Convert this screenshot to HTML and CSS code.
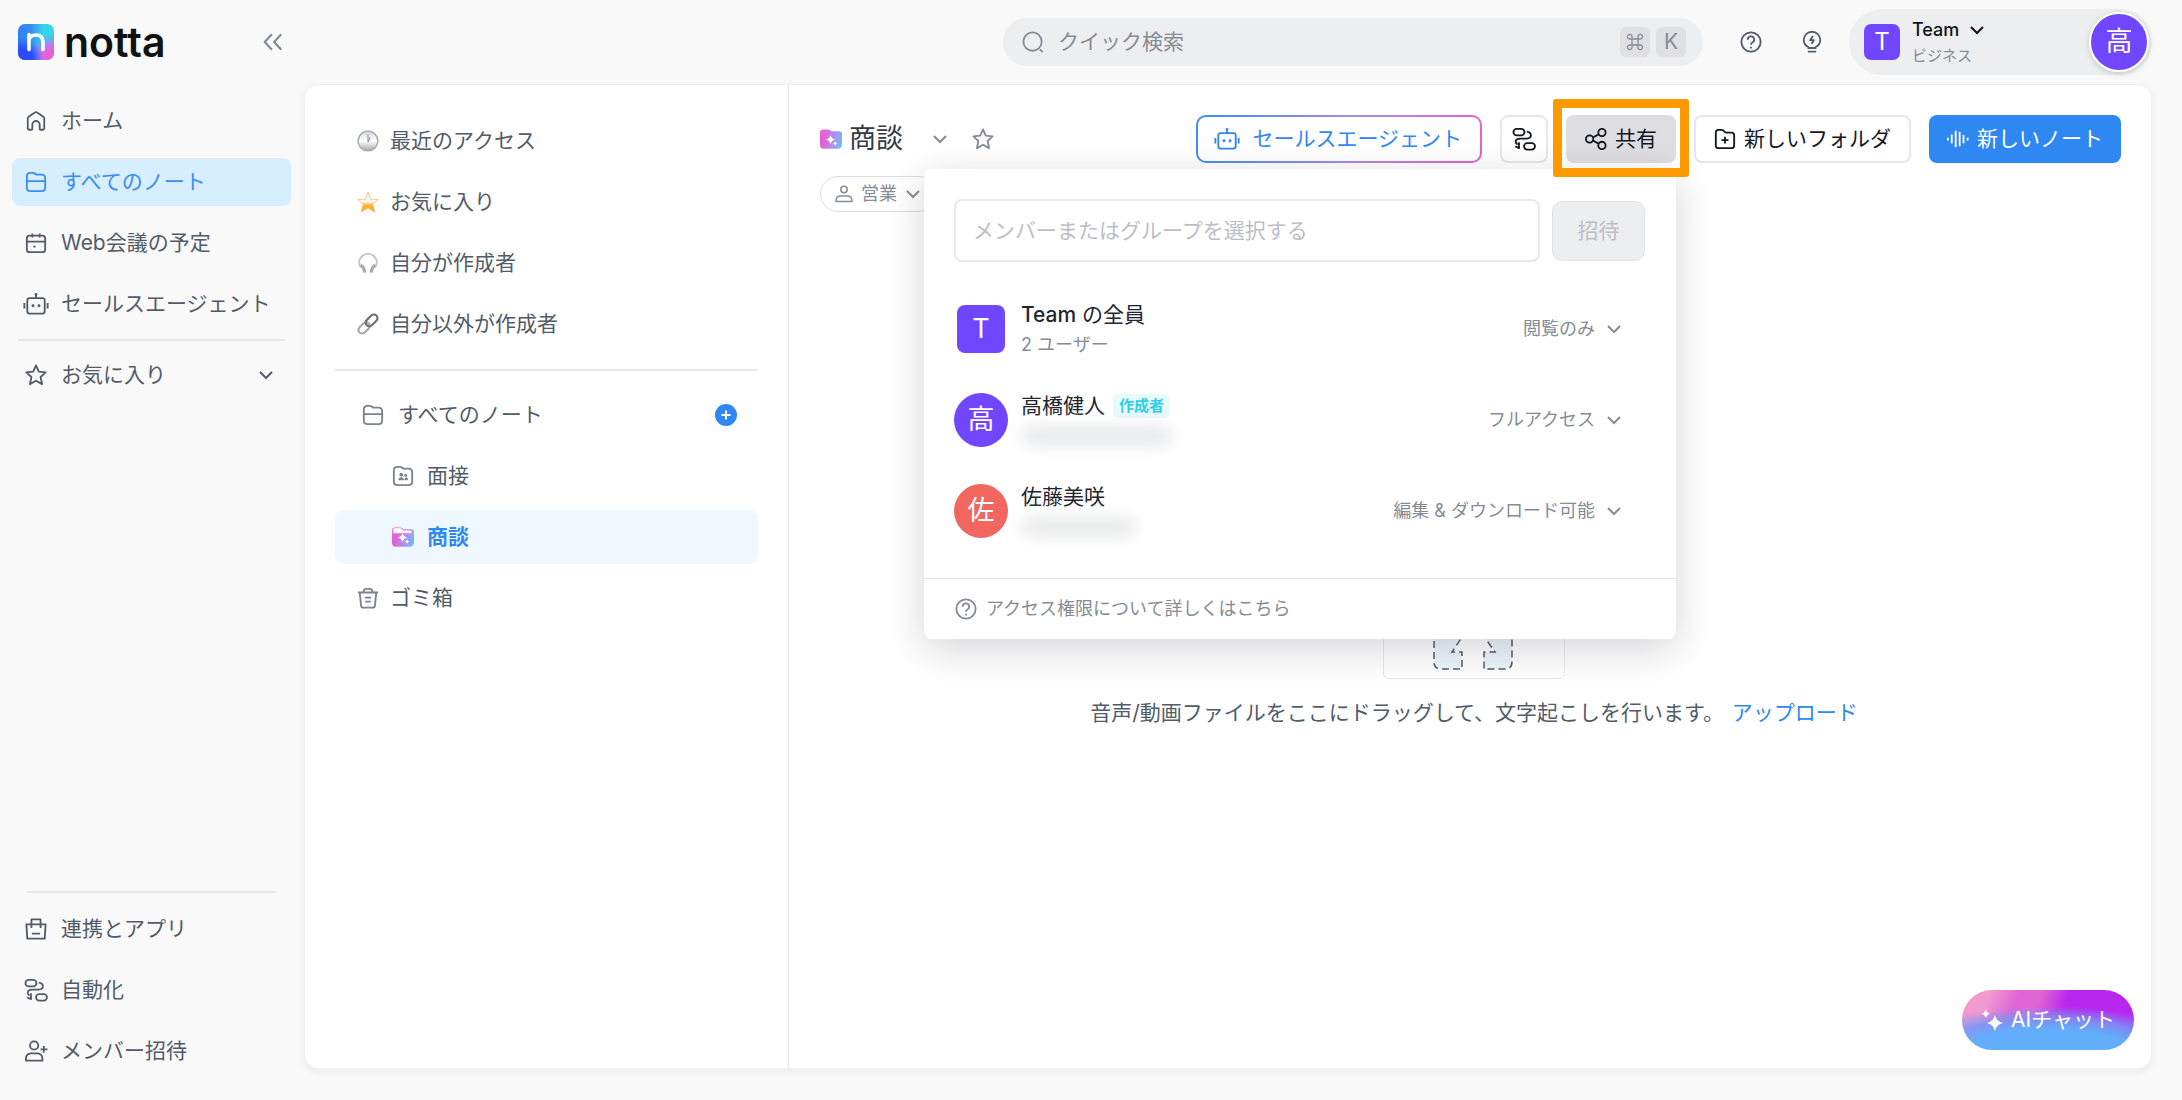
FILE: index.html
```html
<!DOCTYPE html>
<html lang="ja">
<head>
    <meta charset="UTF-8">
    <meta name="viewport" content="width=device-width, initial-scale=1.0">
    <title>商談 - Notta</title>
    <link rel="stylesheet" href="styles.css">
</head>
<body>
    <!-- Shared icons -->
    <svg class="sprite" aria-hidden="true">
        <symbol id="i-home" viewBox="0 0 24 24"><path d="M3 9.500 Q3 8 4.300 7.200 L10.800 2.700 Q12 2 13.200 2.700 L19.700 7.200 Q21 8 21 9.500 V20 Q21 21.500 19.500 21.500 H17 Q16 21.500 16 20.500 V16 A4 4 0 0 0 8 16 V20.500 Q8 21.500 7 21.500 H4.500 Q3 21.500 3 20 Z"/></symbol>
        <symbol id="i-folder" viewBox="0 0 24 24"><path d="M2 6 Q2 2 6 2 H8.500 Q10 2 11 3 Q12 4 13.500 4 H18 Q22 4 22 8 V18 Q22 22 18 22 H6 Q2 22 2 18 Z M2 11 H22"/></symbol>
        <symbol id="i-calendar" viewBox="0 0 24 24"><rect x="2" y="4" width="20" height="18" rx="3"/><path d="M2 10.500 H22 M8 1.500 V6 M16 1.500 V6 M9 16 H11.500"/></symbol>
        <symbol id="i-bot" viewBox="0 0 24 24"><rect x="2.500" y="5.500" width="19" height="17" rx="2.500"/><path d="M12 2 V5.500 M-0.700 11 V17 M24.700 11 V17"/><path stroke-width="3.200" stroke-linecap="round" d="M8.700 14 h.01 M15.300 14 h.01 M12 1.500 h.01"/></symbol>
        <symbol id="i-star" viewBox="0 0 24 24"><path d="M12 1.500 L15 8.300 L22.500 9.200 L17 14.200 L18.600 22 L12 18.200 L5.400 22 L7 14.200 L1.500 9.200 L9 8.300 Z"/></symbol>
        <symbol id="i-down" viewBox="0 0 16 16"><path d="M2 5 L8 11 L14 5"/></symbol>
        <symbol id="i-bag" viewBox="0 0 24 24"><path d="M1.500 7 H22.500 L21.500 22.500 H2.500 Z M7 11 V1.500 H17 V11 M7.500 17 H16.500"/></symbol>
        <symbol id="i-flow" viewBox="0 0 24 24"><rect x="0.500" y="1" width="12" height="7" rx="3.500"/><rect x="12" y="16.500" width="12" height="7" rx="3.500"/><path d="M15 4 Q19.500 4.500 19.500 8 Q19.500 11.500 15 11.500 H8 Q3 11.500 3 15 Q3 17 5 18 M6.500 15.500 V22 L2.500 20"/></symbol>
        <symbol id="i-invite" viewBox="0 0 24 24"><circle cx="10" cy="6" r="4.500"/><path d="M1 22.500 V20 Q1.500 14.500 7 14.500 H13 Q18.500 14.500 19 20 V22.500 Z M20.500 6.500 V14 M17 10.300 H24.500"/></symbol>
        <symbol id="i-person" viewBox="0 0 24 24"><circle cx="12" cy="6" r="4.300"/><path d="M1.500 22 V20 Q2 14.500 7 14.500 H17 Q22 14.500 22.500 20 V22 Z"/></symbol>
        <symbol id="i-help" viewBox="0 0 24 24"><circle cx="12" cy="12" r="10.500"/><path d="M8.500 9.500 A3.500 3.500 0 1 1 13.500 12.500 Q12 13.300 12 15 M12 17.300 V19"/></symbol>
        <symbol id="i-share" viewBox="0 0 24 24"><circle cx="5" cy="12" r="4"/><circle cx="18.500" cy="5" r="4"/><circle cx="18.500" cy="19" r="4"/><path d="M8.700 10.300 L14.800 7 M8.700 13.700 L14.800 17"/></symbol>
        <symbol id="i-aifolder" viewBox="0 0 24 24"><path fill="url(#pink)" stroke="none" d="M0 5 Q0 1.500 4 1.500 H8.500 Q10 1.500 11 2.500 Q12 3.500 13.500 3.500 H21 Q24 3.500 24 7 V18 Q23.500 22.500 20 22.500 H4 Q0 22.500 0 18.500 Z"/><path fill="#fff" stroke="none" d="M11.500 7.500 Q12.500 11.500 16.500 12.500 Q12.500 13.500 11.500 17.500 Q10.500 13.500 6.500 12.500 Q10.500 11.500 11.500 7.500 Z M16.500 14.500 Q17 16.500 19 17 Q17 17.500 16.500 19.500 Q16 17.500 14 17 Q16 16.500 16.500 14.500 Z"/></symbol>
        <linearGradient id="pink" x1="0" y1="0.200" x2="1" y2="0.400">
            <stop offset="0.200" stop-color="#e462d3"/><stop offset="0.600" stop-color="#b48af0"/><stop offset="1" stop-color="#79b4fb"/>
        </linearGradient>
        <linearGradient id="silver" x1="0" y1="0" x2="0" y2="1">
            <stop offset="0" stop-color="#d5d7db"/><stop offset="0.500" stop-color="#ffffff"/><stop offset="1" stop-color="#a6a9ae"/>
        </linearGradient>
        <linearGradient id="gold" x1="0" y1="0" x2="0" y2="1">
            <stop offset="0.500" stop-color="#f7f5f2"/><stop offset="0.650" stop-color="#fbb535"/><stop offset="1" stop-color="#fba21c"/>
        </linearGradient>
    </svg>

    <aside class="sidebar">
        <div class="brand">
            <a href="#" class="brand-link">
                <svg class="brand-mark" viewBox="0 0 36 36">
                    <defs>
                        <linearGradient id="base" x1="0" y1="0" x2="1" y2="0">
                            <stop offset="0" stop-color="#2f80f5"/><stop offset="0.350" stop-color="#3a8cf5"/><stop offset="0.700" stop-color="#35d4e8"/>
                        </linearGradient>
                        <radialGradient id="corner" cx="1" cy="1" r="0.700">
                            <stop offset="0.400" stop-color="#e75fd6"/><stop offset="0.650" stop-color="#c078e8" stop-opacity="0.900"/><stop offset="1" stop-color="#8a8cf5" stop-opacity="0"/>
                        </radialGradient>
                        <radialGradient id="deep" cx="0.100" cy="1" r="0.600">
                            <stop offset="0.500" stop-color="#2b4bff"/><stop offset="1" stop-color="#2b4bff" stop-opacity="0"/>
                        </radialGradient>
                    </defs>
                    <rect width="36" height="36" rx="7" fill="url(#base)"/>
                    <rect width="36" height="36" rx="7" fill="url(#corner)"/>
                    <rect width="36" height="36" rx="7" fill="url(#deep)"/>
                    <path d="M11 10.500 V25.500 M11 16 Q12 11 18 11 Q25 11 25 18 V25.500" fill="none" stroke="#fff" stroke-width="3.600" stroke-linecap="round"/>
                </svg>
                <span class="brand-name">notta</span>
            </a>
            <button class="icon-btn muted" aria-label="閉じる">
                <svg class="icon" viewBox="0 0 20 20"><path d="M9 3 L2.500 10 L9 17 M17.500 3 L11 10 L17.500 17"/></svg>
            </button>
        </div>

        <nav class="side-nav">
            <a href="#" class="side-item"><svg class="icon"><use href="#i-home"/></svg>ホーム</a>
            <a href="#" class="side-item active"><svg class="icon"><use href="#i-folder"/></svg>すべてのノート</a>
            <a href="#" class="side-item"><svg class="icon"><use href="#i-calendar"/></svg>Web会議の予定</a>
            <a href="#" class="side-item"><svg class="icon"><use href="#i-bot"/></svg>セールスエージェント</a>
        </nav>
        <hr class="side-rule">
        <button class="side-item side-toggle">
            <svg class="icon"><use href="#i-star"/></svg>お気に入り
            <svg class="chevron"><use href="#i-down"/></svg>
        </button>

        <hr class="side-rule side-rule-bottom">
        <nav class="side-nav">
            <a href="#" class="side-item"><svg class="icon"><use href="#i-bag"/></svg>連携とアプリ</a>
            <a href="#" class="side-item"><svg class="icon"><use href="#i-flow"/></svg>自動化</a>
            <a href="#" class="side-item"><svg class="icon"><use href="#i-invite"/></svg>メンバー招待</a>
        </nav>
    </aside>

    <div class="page">
        <header class="topbar">
            <label class="search">
                <svg class="icon" viewBox="0 0 24 24"><circle cx="11.500" cy="11.500" r="10"/><path d="M19.500 20 L22.500 23"/></svg>
                <input type="search" placeholder="クイック検索" aria-label="クイック検索">
                <kbd><svg class="cmd" viewBox="0 0 18 18"><path d="M6 6 H12 V12 H6 Z M6 6 H4 A2.300 2.300 0 1 1 6 4 Z M12 6 V4 A2.300 2.300 0 1 1 14 6 Z M12 12 H14 A2.300 2.300 0 1 1 12 14 Z M6 12 V14 A2.300 2.300 0 1 1 4 12 Z"/></svg></kbd>
                <kbd>K</kbd>
            </label>
            <button class="icon-btn" aria-label="ヘルプ"><svg class="icon"><use href="#i-help"/></svg></button>
            <button class="icon-btn" aria-label="お知らせ">
                <svg class="icon" viewBox="0 0 24 24"><path d="M8 18.500 V17.500 Q3 15 3 9.800 A9 9 0 0 1 21 9.800 Q21 15 16 17.500 V18.500 Z M7.500 22.500 H16.500 M13 5.500 L10 10 H14 L11.500 14"/></svg>
            </button>
            <div class="account">
                <span class="team-mark">T</span>
                <div class="account-text">
                    <button class="team-switch">Team <svg class="chevron"><use href="#i-down"/></svg></button>
                    <span class="plan">ビジネス</span>
                </div>
                <button class="avatar account-avatar">高</button>
            </div>
        </header>

        <main class="workspace">
            <section class="folders">
                <a href="#" class="folder-item">
                    <svg class="icon" viewBox="0 0 24 24"><circle cx="12" cy="12" r="10.800" fill="url(#silver)" stroke="#a5a8ad" stroke-width="1.500"/><path d="M12 4.500 V13 L14.500 8" stroke="#95989e" stroke-width="1.200"/></svg>最近のアクセス
                </a>
                <a href="#" class="folder-item">
                    <svg class="icon" viewBox="0 0 24 24"><path d="M12 1 L15 9 L23 9.300 L17 14.500 L19.500 23 L12 18.500 L4.500 23 L7 14.500 L1 9.300 L9 9 Z" fill="url(#gold)" stroke="#f3b65c" stroke-width="0.800"/></svg>お気に入り
                </a>
                <a href="#" class="folder-item">
                    <svg class="icon" viewBox="0 0 24 24"><path d="M4 17 Q1.500 12 3 8 Q6 2 12 2 Q18 2 21 8 Q22.500 12 20 17" stroke="#c3c5c9"/><path d="M4 14.500 Q7.500 16 8.500 22.500 M20 14.500 Q16.500 16 15.500 22.500" stroke="#a7a9ae" stroke-width="3.500"/></svg>自分が作成者
                </a>
                <a href="#" class="folder-item">
                    <svg class="icon" viewBox="0 0 24 24"><g transform="rotate(-45 12 12)"><rect x="-1" y="8" width="14" height="8" rx="4" stroke="#a7a9ae" stroke-width="2.400"/><rect x="10" y="8" width="15" height="8" rx="4" stroke="#6f7379" stroke-width="2.400"/></g></svg>自分以外が作成者
                </a>
                <hr class="folder-rule">
                <div class="folder-item folder-root">
                    <a href="#"><svg class="icon"><use href="#i-folder"/></svg>すべてのノート</a>
                    <button class="add-btn" aria-label="追加"><svg viewBox="0 0 22 22"><path d="M11 6.500 V15.500 M6.500 11 H15.500"/></svg></button>
                </div>
                <a href="#" class="folder-item nested">
                    <svg class="icon" viewBox="0 0 24 24"><path d="M2 6 Q2 2 6 2 H8.500 Q10 2 11 3 Q12 4 13.500 4 H18 Q22 4 22 8 V18 Q22 22 18 22 H6 Q2 22 2 18 Z"/><circle cx="10" cy="10.500" r="1" /><circle cx="15" cy="11.300" r="0.700"/><path d="M8 15.500 Q10 13 12 15.500 Z M14.500 15.500 Q15.500 13.500 16.500 15.500 Z"/></svg>面接
                </a>
                <a href="#" class="folder-item nested active"><svg class="icon" viewBox="0 0 24 24"><use href="#i-aifolder"/><path d="M1 8 V5 Q1 2 4 2 H8 Q10 2 11 3.500 Q12 4.500 13.500 4.500 H19 Q22 4.500 22 8 Z" fill="#fff" stroke="#f08bd2" stroke-width="0.800"/></svg>商談</a>
                <a href="#" class="folder-item">
                    <svg class="icon" viewBox="0 0 24 24"><path d="M1 6 H23 M7 5.500 Q7.500 2 10 2 H14 Q16.500 2 17 5.500 M3 6.500 L4.500 20.500 Q4.700 22.500 7 22.500 H17 Q19.300 22.500 19.500 20.500 L21 6.500 M8.500 11.500 H15.500 M9 16 H15"/></svg>ゴミ箱
                </a>
            </section>

            <section class="content">
                <div class="content-head">
                    <h1><svg class="icon"><use href="#i-aifolder"/></svg>商談</h1>
                    <button class="icon-btn muted title-menu" aria-label="メニュー"><svg class="chevron"><use href="#i-down"/></svg></button>
                    <button class="icon-btn muted title-star" aria-label="お気に入り"><svg class="icon"><use href="#i-star"/></svg></button>

                    <div class="actions">
                        <button class="btn btn-agent"><svg class="icon"><use href="#i-bot"/></svg>セールスエージェント</button>
                        <button class="btn btn-square" aria-label="自動化"><svg class="icon"><use href="#i-flow"/></svg></button>
                        <div class="share">
                            <button class="btn btn-share"><svg class="icon"><use href="#i-share"/></svg>共有</button>

                            <div class="share-panel">
                                <form class="invite">
                                    <input type="text" placeholder="メンバーまたはグループを選択する" aria-label="メンバー">
                                    <button type="button" disabled>招待</button>
                                </form>
                                <ul class="members">
                                    <li>
                                        <span class="avatar team">T</span>
                                        <div class="member-text">
                                            <strong><span><b>Team</b> の全員</span></strong>
                                            <small>2 ユーザー</small>
                                        </div>
                                        <label class="role"><select aria-label="Team の権限"><option>閲覧のみ</option></select><svg class="chevron"><use href="#i-down"/></svg></label>
                                    </li>
                                    <li>
                                        <span class="avatar">高</span>
                                        <div class="member-text">
                                            <strong>高橋健人 <span class="badge">作成者</span></strong>
                                            <span class="hidden-mail"></span>
                                        </div>
                                        <label class="role"><select aria-label="高橋健人の権限"><option>フルアクセス</option></select><svg class="chevron"><use href="#i-down"/></svg></label>
                                    </li>
                                    <li>
                                        <span class="avatar red">佐</span>
                                        <div class="member-text">
                                            <strong>佐藤美咲</strong>
                                            <span class="hidden-mail short"></span>
                                        </div>
                                        <label class="role"><select aria-label="佐藤美咲の権限"><option>編集 &amp; ダウンロード可能</option></select><svg class="chevron"><use href="#i-down"/></svg></label>
                                    </li>
                                </ul>
                                <a href="#" class="share-help"><svg class="icon"><use href="#i-help"/></svg>アクセス権限について詳しくはこちら</a>
                            </div>
                        </div>
                        <button class="btn btn-folder">
                            <svg class="icon" viewBox="0 0 24 24"><path d="M2 5 Q2 2 5 2 H8.500 Q10 2 11 3.500 Q12 5 13.500 5 H19 Q22 5 22 8 V19 Q22 22 19 22 H5 Q2 22 2 19 Z M12 9.500 V17 M8.200 13.300 H15.800"/></svg>新しいフォルダ
                        </button>
                        <button class="btn btn-note">
                            <svg class="icon" viewBox="0 0 24 24"><path d="M1 10.500 V13.500 M5.200 7 V17 M9.500 3 V21 M13.800 4 V20 M18 7.500 V16.500 M22.500 10.500 V13.500"/></svg>新しいノート
                        </button>
                    </div>
                </div>

                <button class="chip"><svg class="icon"><use href="#i-person"/></svg>営業<svg class="chevron"><use href="#i-down"/></svg></button>

                <div class="dropzone">
                    <svg class="drop-art" viewBox="0 0 182 120">
                        <rect x="0.500" y="0.500" width="181" height="119" rx="5" fill="#fff" stroke="#e8e9ec"/>
                        <path d="M51 60 V103 Q51 110 58 110 H79 V93 H69 L90 62 L112 93 H101 V110 H122 Q129 110 129 103 V60" fill="#edf5fc" stroke="#555c68" stroke-width="1.500" stroke-dasharray="7 4"/>
                    </svg>
                    <p>音声/動画ファイルをここにドラッグして、文字起こしを行います。 <a href="#">アップロード</a></p>
                </div>

                <button class="ai-chat">
                    <svg viewBox="0 0 24 24"><path d="M14.500 6 Q16 13 23 14.500 Q16 16 14.500 23 Q13 16 6 14.500 Q13 13 14.500 6 Z M5 0.500 Q5.800 4.200 9.500 5 Q5.800 5.800 5 9.500 Q4.200 5.800 0.500 5 Q4.200 4.200 5 0.500 Z"/></svg>AIチャット
                </button>
            </section>
        </main>
    </div>
</body>
</html>
```
FILE: styles.css
```css
:root {
    --bg: #f9f9f9;
    --text: #525c69;
    --text-dark: #1f2630;
    --muted: #868c96;
    --line: #e6e7ea;
    --blue: #2f88f2;
    --purple: #7047ff;
}

* {
    box-sizing: border-box;
}

body {
    margin: 0;
    min-height: 100vh;
    display: flex;
    background: var(--bg);
    color: var(--text);
    font-family: Inter, "Noto Sans CJK JP", sans-serif;
    font-size: 21px;
    line-height: 32px;
}

a {
    color: inherit;
    text-decoration: none;
}

button,
input,
select {
    font: inherit;
    color: inherit;
}

button {
    border: none;
    background: none;
    padding: 0;
    cursor: pointer;
}

hr {
    border: none;
    border-top: 2px solid var(--line);
    margin: 0;
}

.sprite {
    position: absolute;
    width: 0;
    height: 0;
}

symbol {
    overflow: visible;
}

.icon {
    width: 22px;
    height: 22px;
    flex: none;
    fill: none;
    stroke: currentColor;
    stroke-width: 2;
    stroke-linejoin: round;
    overflow: visible;
}

.chevron {
    width: 16px;
    height: 16px;
    flex: none;
    fill: none;
    stroke: currentColor;
    stroke-width: 2;
}

.icon-btn {
    display: flex;
    align-items: center;
    justify-content: center;
}

.muted {
    color: var(--muted);
}

/* Sidebar */
.sidebar {
    width: 304px;
    flex: none;
    display: flex;
    flex-direction: column;
    padding: 0 13px 25px 12px;
}

.brand {
    display: flex;
    align-items: center;
    justify-content: space-between;
    height: 84px;
    padding: 0 7px 0 6px;
    margin-bottom: 13px;
}

.brand-link {
    display: flex;
    align-items: center;
    gap: 10px;
}

.brand-mark {
    width: 36px;
    height: 36px;
}

.brand-name {
    color: #101214;
    font-size: 41px;
    font-weight: 600;
}

.side-nav {
    display: flex;
    flex-direction: column;
    gap: 13px;
}

.side-item {
    display: flex;
    align-items: center;
    gap: 14px;
    height: 48px;
    padding: 0 13px;
    border-radius: 8px;
    white-space: nowrap;
}

.side-item.active {
    background: #d6eeff;
    color: #3a8cf7;
}

.side-rule {
    margin: 11px 6px 10px;
}

.side-rule-bottom {
    margin: auto 15px 12px;
}

.side-toggle .chevron {
    margin-left: auto;
    margin-right: 4px;
}

/* Top bar */
.page {
    flex: 1;
    min-width: 0;
    display: flex;
    flex-direction: column;
    padding: 0 30px 31px 0;
}

.topbar {
    display: flex;
    align-items: center;
    justify-content: flex-end;
    height: 84px;
}

.search {
    display: flex;
    align-items: center;
    width: 100%;
    max-width: 700px;
    height: 48px;
    padding: 0 17px 0 19px;
    margin-right: 37px;
    border-radius: 24px;
    background: #edeeef;
    color: var(--muted);
}

.search input {
    flex: 1;
    min-width: 0;
    border: none;
    outline: none;
    background: none;
    padding: 0 14px;
}

input::placeholder {
    color: inherit;
    opacity: 1;
}

kbd {
    display: flex;
    align-items: center;
    justify-content: center;
    width: 30px;
    height: 30px;
    margin-left: 6px;
    border-radius: 6px;
    background: #dfdfe4;
    font-family: inherit;
    font-size: 21px;
}

.cmd {
    width: 18px;
    height: 18px;
    fill: none;
    stroke: currentColor;
    stroke-width: 1.3;
}

.topbar .icon-btn {
    margin-right: 39px;
}

.topbar .icon-btn + .account {
    margin-left: -13px;
}

.account {
    display: flex;
    flex: none;
    align-items: center;
    width: 303px;
    height: 66px;
    padding: 0 3px 0 15px;
    border-radius: 33px;
    background: #edeeef;
}

.team-mark {
    width: 36px;
    height: 36px;
    border-radius: 7px;
    background: var(--purple);
    color: #fff;
    font-size: 24px;
    line-height: 36px;
    text-align: center;
}

.account-text {
    display: flex;
    flex-direction: column;
    align-items: flex-start;
    margin-left: 12px;
}

.team-switch {
    display: flex;
    align-items: center;
    gap: 10px;
    color: #111418;
    font-size: 18px;
    font-weight: 500;
    line-height: 28px;
}

.plan {
    color: var(--muted);
    font-size: 15px;
    line-height: 24px;
}

.avatar {
    width: 54px;
    height: 54px;
    flex: none;
    border-radius: 50%;
    background: var(--purple);
    color: #fff;
    font-size: 27px;
    line-height: 54px;
    text-align: center;
}

.account-avatar {
    width: 60px;
    height: 60px;
    margin-left: auto;
    border: 2px solid #fff;
    box-shadow: 0 2px 6px rgba(0, 0, 0, 0.15);
}

/* Workspace */
.workspace {
    flex: 1;
    display: flex;
    border: 1px solid #f0f0f1;
    border-radius: 14px;
    background: #fff;
    box-shadow: 0 3px 8px rgba(0, 0, 0, 0.06);
}

.folders {
    width: 484px;
    flex: none;
    display: flex;
    flex-direction: column;
    gap: 7px;
    padding: 29px 30px 0;
    border-right: 1px solid var(--line);
}

.folder-item {
    display: flex;
    align-items: center;
    gap: 11px;
    height: 54px;
    padding: 0 22px;
    border-radius: 8px;
}

.folder-rule {
    margin: 11px 0 10px;
}

.folder-root {
    justify-content: space-between;
    padding: 0 21px 0 27px;
}

.folder-root a {
    display: flex;
    align-items: center;
    gap: 14px;
}

.folder-root .icon,
.folder-item:last-child .icon,
.nested .icon {
    color: #7d838d;
}

.nested {
    gap: 13px;
    padding-left: 57px;
}

.folder-item.active {
    background: #eff8ff;
    color: var(--blue);
    font-weight: 700;
}

.add-btn {
    width: 22px;
    height: 22px;
    border-radius: 50%;
    background: var(--blue);
}

.add-btn svg {
    display: block;
    stroke: #fff;
    stroke-width: 2;
}

/* Content */
.content {
    flex: 1;
    min-width: 0;
    position: relative;
    display: flex;
    flex-direction: column;
    padding: 30px 30px 0 31px;
}

.content-head {
    display: flex;
    align-items: center;
    height: 48px;
}

h1 {
    display: flex;
    align-items: center;
    gap: 7px;
    margin: 0;
    color: #333a44;
    font-size: 27px;
    font-weight: 400;
}

.title-menu {
    margin-left: 29px;
}

.title-star {
    margin-left: 24px;
}

.actions {
    display: flex;
    gap: 18px;
    margin-left: auto;
}

.btn {
    display: flex;
    align-items: center;
    justify-content: center;
    gap: 8px;
    height: 48px;
    padding: 0 18px;
    border: 2px solid var(--line);
    border-radius: 8px;
    background: #fff;
    color: #14181e;
    white-space: nowrap;
}

.btn-agent {
    gap: 14px;
    border-color: transparent;
    border-radius: 10px;
    background: linear-gradient(#fff, #fff) padding-box,
        linear-gradient(100deg, #3a8cf7, #a78bea 55%, #e564c8) border-box;
    color: var(--blue);
}

.btn-square {
    width: 48px;
    padding: 0;
}

.btn-share {
    padding: 0 19px;
    border: none;
    background: #dedde2;
}

.btn-note {
    border: none;
    background: var(--blue);
    color: #fff;
}

.share {
    position: relative;
}

/* Highlight frame around the share button */
.share::after {
    content: "";
    position: absolute;
    inset: -16px -13px -14px;
    border: 9px solid #ff9900;
    border-radius: 3px;
    z-index: 3;
    pointer-events: none;
}

.share-panel {
    position: absolute;
    top: calc(100% + 6px);
    right: 0;
    z-index: 2;
    width: 752px;
    border-radius: 8px;
    background: #fff;
    box-shadow: 0 10px 40px rgba(20, 24, 40, 0.18);
}

.invite {
    display: flex;
    align-items: center;
    gap: 12px;
    padding: 30px 31px 0 30px;
}

.invite input {
    flex: 1;
    min-width: 0;
    height: 63px;
    padding: 0 17px;
    border: 2px solid var(--line);
    border-radius: 8px;
    color: #bcbec4;
}

.invite button {
    width: 93px;
    height: 60px;
    border: 1px solid #e2e3e6;
    border-radius: 10px;
    background: #edeef0;
    color: #bcbec4;
}

.members {
    display: flex;
    flex-direction: column;
    gap: 37px;
    margin: 0;
    padding: 40px 54px 40px 30px;
    list-style: none;
}

.members li {
    display: flex;
    align-items: center;
    gap: 13px;
    height: 54px;
}

.avatar.team {
    width: 48px;
    height: 48px;
    margin: 0 3px;
    border-radius: 8px;
    line-height: 48px;
}

.avatar.red {
    background: #f26660;
}

.member-text {
    display: flex;
    flex-direction: column;
}

.member-text strong {
    display: flex;
    align-items: center;
    gap: 8px;
    color: var(--text-dark);
    font-weight: 400;
}

.member-text b {
    font-weight: 500;
}

.member-text small {
    color: var(--muted);
    font-size: 18px;
    line-height: 28px;
}

.badge {
    padding: 0 6px;
    border-radius: 5px;
    background: #e6fbfa;
    color: #2fd0e6;
    font-size: 15px;
    font-weight: 700;
    line-height: 24px;
}

.hidden-mail {
    width: 152px;
    height: 20px;
    margin: 4px 0;
    border-radius: 10px;
    background: #e8e9eb;
    filter: blur(8px);
}

.hidden-mail.short {
    width: 116px;
}

.role {
    display: flex;
    align-items: center;
    gap: 11px;
    margin-left: auto;
    color: var(--muted);
    font-size: 18px;
}

.role select {
    appearance: none;
    field-sizing: content;
    border: none;
    background: none;
    padding: 0;
}

.share-help {
    display: flex;
    align-items: center;
    gap: 9px;
    height: 61px;
    padding: 0 31px;
    border-top: 1px solid var(--line);
    color: var(--muted);
    font-size: 18px;
}

.chip {
    display: flex;
    align-items: center;
    align-self: flex-start;
    gap: 8px;
    height: 36px;
    margin-top: 13px;
    padding: 0 14px;
    border: 1px solid #d9dbde;
    border-radius: 18px;
    color: var(--muted);
    font-size: 18px;
}

.chip .icon {
    width: 18px;
    height: 18px;
}

.dropzone {
    display: flex;
    flex-direction: column;
    align-items: center;
    margin-top: 347px;
    padding-left: 7px;
}

.drop-art {
    width: 182px;
    height: 120px;
}

.dropzone p {
    margin: 18px 0 0;
}

.dropzone a {
    margin-left: 2px;
    color: var(--blue);
}

.ai-chat {
    position: absolute;
    right: 17px;
    bottom: 18px;
    display: flex;
    align-items: center;
    justify-content: center;
    gap: 7px;
    width: 172px;
    height: 60px;
    border-radius: 30px;
    background:
        radial-gradient(160px 50px at 50% 110%, #62aefa 55%, rgba(120, 150, 246, 0.85) 75%, rgba(160, 110, 240, 0) 100%),
        linear-gradient(110deg, #f29ad0 15%, #df64d4 30%, #df64d4 42%, #b827ee 56%);
    color: #fff;
}

.ai-chat svg {
    width: 23px;
    height: 23px;
    fill: #fff;
}
```
